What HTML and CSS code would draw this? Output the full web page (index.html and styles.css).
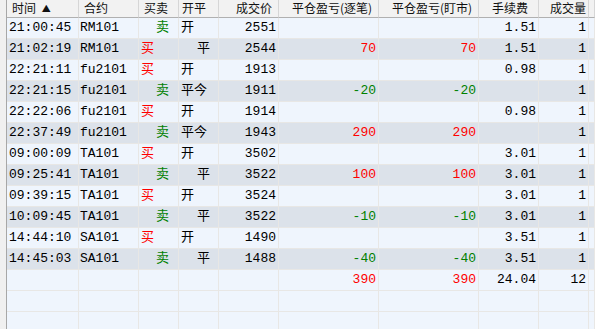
FILE: index.html
```html
<!DOCTYPE html>
<html lang="zh">
<head>
<meta charset="utf-8">
<link rel="stylesheet" href="styles.css">
</head>
<body>
<div class="window">
  <div class="side"></div>
  <div class="grid">
    <div class="row head">
      <div class="c l">时间 <span class="sort">▲</span></div>
      <div class="c l">合约</div>
      <div class="c l">买卖</div>
      <div class="c l hk">开平</div>
      <div class="c r">成交价</div>
      <div class="c r">平仓盈亏(逐笔)</div>
      <div class="c r">平仓盈亏(盯市)</div>
      <div class="c r fee">手续费</div>
      <div class="c r vol">成交量</div>
      <div class="c"></div>
    </div>

    <div class="row odd"><div class="c t">21:00:45</div><div class="c k">RM101</div><div class="c s sell">卖</div><div class="c o">开</div><div class="c n">2551</div><div class="c n"></div><div class="c n"></div><div class="c n">1.51</div><div class="c n">1</div><div class="c"></div></div>
    <div class="row even"><div class="c t">21:02:19</div><div class="c k">RM101</div><div class="c s buy">买</div><div class="c o close">平</div><div class="c n">2544</div><div class="c n pos">70</div><div class="c n pos">70</div><div class="c n">1.51</div><div class="c n">1</div><div class="c"></div></div>
    <div class="row odd"><div class="c t">22:21:11</div><div class="c k">fu2101</div><div class="c s buy">买</div><div class="c o">开</div><div class="c n">1913</div><div class="c n"></div><div class="c n"></div><div class="c n">0.98</div><div class="c n">1</div><div class="c"></div></div>
    <div class="row even"><div class="c t">22:21:15</div><div class="c k">fu2101</div><div class="c s sell">卖</div><div class="c o">平今</div><div class="c n">1911</div><div class="c n neg">-20</div><div class="c n neg">-20</div><div class="c n"></div><div class="c n">1</div><div class="c"></div></div>
    <div class="row odd"><div class="c t">22:22:06</div><div class="c k">fu2101</div><div class="c s buy">买</div><div class="c o">开</div><div class="c n">1914</div><div class="c n"></div><div class="c n"></div><div class="c n">0.98</div><div class="c n">1</div><div class="c"></div></div>
    <div class="row even"><div class="c t">22:37:49</div><div class="c k">fu2101</div><div class="c s sell">卖</div><div class="c o">平今</div><div class="c n">1943</div><div class="c n pos">290</div><div class="c n pos">290</div><div class="c n"></div><div class="c n">1</div><div class="c"></div></div>
    <div class="row odd"><div class="c t">09:00:09</div><div class="c k">TA101</div><div class="c s buy">买</div><div class="c o">开</div><div class="c n">3502</div><div class="c n"></div><div class="c n"></div><div class="c n">3.01</div><div class="c n">1</div><div class="c"></div></div>
    <div class="row even"><div class="c t">09:25:41</div><div class="c k">TA101</div><div class="c s sell">卖</div><div class="c o close">平</div><div class="c n">3522</div><div class="c n pos">100</div><div class="c n pos">100</div><div class="c n">3.01</div><div class="c n">1</div><div class="c"></div></div>
    <div class="row odd"><div class="c t">09:39:15</div><div class="c k">TA101</div><div class="c s buy">买</div><div class="c o">开</div><div class="c n">3524</div><div class="c n"></div><div class="c n"></div><div class="c n">3.01</div><div class="c n">1</div><div class="c"></div></div>
    <div class="row even"><div class="c t">10:09:45</div><div class="c k">TA101</div><div class="c s sell">卖</div><div class="c o close">平</div><div class="c n">3522</div><div class="c n neg">-10</div><div class="c n neg">-10</div><div class="c n">3.01</div><div class="c n">1</div><div class="c"></div></div>
    <div class="row odd"><div class="c t">14:44:10</div><div class="c k">SA101</div><div class="c s buy">买</div><div class="c o">开</div><div class="c n">1490</div><div class="c n"></div><div class="c n"></div><div class="c n">3.51</div><div class="c n">1</div><div class="c"></div></div>
    <div class="row even"><div class="c t">14:45:03</div><div class="c k">SA101</div><div class="c s sell">卖</div><div class="c o close">平</div><div class="c n">1488</div><div class="c n neg">-40</div><div class="c n neg">-40</div><div class="c n">3.51</div><div class="c n">1</div><div class="c"></div></div>

    <div class="row odd"><div class="c t"></div><div class="c k"></div><div class="c s"></div><div class="c o"></div><div class="c n"></div><div class="c n pos">390</div><div class="c n pos">390</div><div class="c n">24.04</div><div class="c n">12</div><div class="c"></div></div>
    <div class="row odd"><div class="c"></div><div class="c"></div><div class="c"></div><div class="c"></div><div class="c"></div><div class="c"></div><div class="c"></div><div class="c"></div><div class="c"></div><div class="c"></div></div>
    <div class="row odd"><div class="c"></div><div class="c"></div><div class="c"></div><div class="c"></div><div class="c"></div><div class="c"></div><div class="c"></div><div class="c"></div><div class="c"></div><div class="c"></div></div>
    <div class="row odd"><div class="c"></div><div class="c"></div><div class="c"></div><div class="c"></div><div class="c"></div><div class="c"></div><div class="c"></div><div class="c"></div><div class="c"></div><div class="c"></div></div>
  </div>
</div>
</body>
</html>
```

FILE: styles.css
```css
html, body {
  margin: 0;
  padding: 0;
  width: 595px;
  height: 329px;
  overflow: hidden;
  background: #eff5fd;
}

.window {
  display: flex;
  height: 329px;
  overflow: hidden;
}

.side {
  width: 6px;
  flex: none;
  background: #f0f0f0;
  border-right: 1px solid #a7a7a7;
}

.grid {
  flex: 1;
  display: flex;
  flex-direction: column;
  background: #eff5fd;
}

.row {
  display: grid;
  grid-template-columns: 72px 60px 40px 40px 60px 100px 100px 60px 50px 1fr;
  height: 21px;
  flex: none;
  font-family: "Liberation Mono", "Noto Sans CJK SC", monospace;
  font-size: 13px;
  line-height: 20px;
  color: #000;
}

.row .c {
  border-right: 1px solid #e8e7e5;
  border-bottom: 1px solid #e8e7e5;
  white-space: nowrap;
  overflow: hidden;
}

.row.odd { background: #eff5fd; }
.row.even { background: #dce2ea; }

.row.head {
  height: 18px;
  background: #f2f2f2;
  font-family: "Noto Sans CJK SC", "Noto Sans", sans-serif;
  font-size: 12px;
  line-height: 16px;
  color: #111;
}

.row.head .c {
  border-right: 1px solid #d6d6d6;
  border-bottom: 1px solid #b0b0b0;
}

.row.head .l { padding-left: 5px; }
.row.head .hk { padding-left: 3px; }
.row.head .r { text-align: right; padding-right: 6px; }
.row.head .fee { padding-right: 10px; }
.row.head .vol { padding-right: 2px; }

.sort {
  font-size: 9px;
  margin-left: 3px;
  vertical-align: 1px;
}

.t { padding-left: 2px; }
.k { padding-left: 1px; }
.s { padding-left: 2px; }
.o { padding-left: 2px; }
.n { text-align: right; padding-right: 2px; }

.s.sell { padding-left: 17px; }
.o.close { padding-left: 18px; }

.buy { color: #ff0000; }
.sell { color: #008000; }
.pos { color: #ff0000; }
.neg { color: #008000; }
```
